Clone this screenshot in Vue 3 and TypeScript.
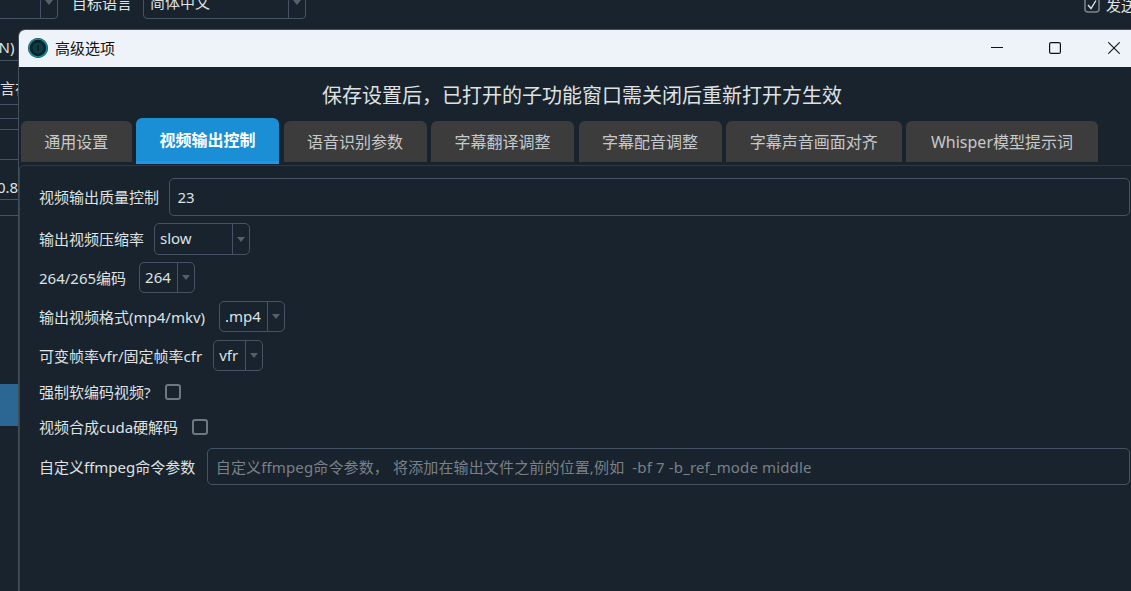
<script setup lang="ts">
const tabs = [
  { label: '通用设置', width: 110.5 },
  { label: '视频输出控制', width: 143, active: true },
  { label: '语音识别参数', width: 143 },
  { label: '字幕翻译调整', width: 143 },
  { label: '字幕配音调整', width: 143 },
  { label: '字幕声音画面对齐', width: 175.5 },
  { label: 'Whisper模型提示词', width: 192 },
]
const selects = [
  { label: '输出视频压缩率', value: 'slow', width: 96, cls: 'r2' },
  { label: '264/265编码', value: '264', width: 56, cls: 'r3' },
  { label: '输出视频格式(mp4/mkv)', value: '.mp4', width: 66, cls: 'r4' },
  { label: '可变帧率vfr/固定帧率cfr', value: 'vfr', width: 50, cls: 'r5' },
]
</script>

<template>
  <div class="desk">
    <div class="back-top">
      <div class="bsel bsel-a"><span class="bval"></span><span class="arrow-cell"><i class="tri"></i></span></div>
      <span class="blabel">目标语言</span>
      <div class="bsel bsel-b"><span class="bval">简体中文</span><span class="arrow-cell"><i class="tri"></i></span></div>
      <span class="bcheck"><svg width="16" height="16" viewBox="0 0 16 16"><rect x="1" y="1" width="14" height="14" rx="3" fill="none" stroke="#7d858d" stroke-width="1.5"/><path d="M4 8l3 3.5L12 3.5" fill="none" stroke="#dfe1e2" stroke-width="1.4"/></svg><span>发送</span></span>
    </div>
    <div class="back-left">
      <div class="bl a"><span>(N)</span></div>
      <div class="bl b"><span>言在</span></div>
      <div class="bl c"></div>
      <div class="bl d"></div>
      <div class="bl e"></div>
      <div class="bl f"><span>0.8</span></div>
      <div class="bl g"></div>
      <div class="blue"></div>
    </div>

    <section class="dialog">
      <header class="titlebar">
        <svg class="logo" width="20" height="20" viewBox="0 0 20 20">
          <circle cx="10" cy="10" r="10" fill="#06222a"/>
          <circle cx="10" cy="10" r="9" fill="none" stroke="#1c8795" stroke-width="1.6"/>
          <circle cx="10" cy="10" r="5.5" fill="#103a44"/>
          <rect x="9.2" y="7" width="1.6" height="6" fill="#072229"/>
        </svg>
        <span class="wintitle">高级选项</span>
        <div class="winbtns">
          <svg width="12" height="12" viewBox="0 0 12 12"><path d="M0 5.5h12" stroke="#111" stroke-width="1.2"/></svg>
          <svg width="12" height="12" viewBox="0 0 12 12"><rect x="0.6" y="0.6" width="10.8" height="10.8" rx="1.5" fill="none" stroke="#111" stroke-width="1.2"/></svg>
          <svg class="close" width="12" height="12" viewBox="0 0 12 12"><path d="M0.3 0.3l11.4 11.4M11.7 0.3L0.3 11.7" stroke="#111" stroke-width="1.1"/></svg>
        </div>
      </header>
      <div class="body">
        <h1 class="notice">保存设置后，已打开的子功能窗口需关闭后重新打开方生效</h1>
        <nav class="tabs">
          <button v-for="t in tabs" :key="t.label" class="tab" :class="{ active: t.active }" :style="{ width: t.width + 'px' }">{{ t.label }}</button>
        </nav>
        <div class="form">
          <div class="row r1">
            <label>视频输出质量控制</label>
            <input class="field" value="23" />
          </div>
          <div v-for="s in selects" :key="s.label" class="row" :class="s.cls">
            <label>{{ s.label }}</label>
            <div class="select" :style="{ width: s.width + 'px' }">
              <span class="val">{{ s.value }}</span>
              <span class="arrow-cell"><i class="tri"></i></span>
            </div>
          </div>
          <div class="row r6"><label>强制软编码视频?</label><span class="check"></span></div>
          <div class="row r7"><label>视频合成cuda硬解码</label><span class="check"></span></div>
          <div class="row r8">
            <label>自定义ffmpeg命令参数</label>
            <input class="field ph" placeholder="自定义ffmpeg命令参数， 将添加在输出文件之前的位置,例如  -bf 7 -b_ref_mode middle" />
          </div>
        </div>
      </div>
    </section>
  </div>
</template>

<style>
html, body { margin: 0; background: #19232d; overflow: hidden; }
</style>

<style scoped>
.desk {
  position: relative;
  width: 1131px;
  height: 591px;
  overflow: hidden;
  background: #19232d;
  color: #dfe1e2;
  font-family: "Noto Sans", "Noto Sans CJK SC", sans-serif;
  font-size: 15px;
}
.back-top { position: absolute; left: 0; top: -14px; width: 1131px; height: 33px; }
.bsel {
  position: absolute; top: 0; height: 33px; box-sizing: border-box;
  border: 1.5px solid #455364; border-radius: 4px; display: flex;
}
.bsel-a { left: -80px; width: 138px; }
.bsel-b { left: 143px; width: 163px; }
.bval { flex: 1; padding-left: 6px; line-height: 30px; }
.blabel { position: absolute; left: 72px; top: 7px; line-height: 20px; }
.bcheck { position: absolute; left: 1084px; top: 9px; display: flex; align-items: center; gap: 6px; line-height: 20px; white-space: nowrap; }
.back-left { position: absolute; left: 0; top: 0; width: 19px; height: 591px; }
.bl { position: absolute; left: 0; width: 19px; border-bottom: 1px solid #455364; overflow: hidden; white-space: nowrap; }
.bl span { display: block; }
.bl.a { top: 36px; height: 24px; line-height: 22px; }
.bl.a span { margin-left: -6px; }
.bl.b { top: 60px; height: 44px; line-height: 56px; }
.bl.c { top: 104px; height: 14px; }
.bl.d { top: 118px; height: 11px; }
.bl.e { top: 130px; height: 29px; }
.bl.f { top: 160px; height: 39px; line-height: 54px; }
.bl.f span { margin-left: -3px; }
.bl.g { top: 200px; height: 15px; }
.blue { position: absolute; left: 0; top: 384px; width: 19px; height: 42px; background: #2c6692; }

.dialog {
  position: absolute; left: 18px; top: 29px; width: 1120px; height: 570px;
  box-sizing: border-box; border-left: 1px solid #43505c; border-top: 1px solid #43505c;
  border-top-left-radius: 7px; overflow: hidden; background: #19232d;
}
.titlebar {
  height: 37px; background: #eef3f9; display: flex; align-items: center; color: #111;
  padding-left: 9px; padding-bottom: 1px; box-sizing: border-box;
}
.logo { flex: none; }
.wintitle { margin-left: 7px; font-size: 15px; line-height: 20px; margin-bottom: 1px; }
.winbtns { position: absolute; left: 972px; top: 12px; display: flex; gap: 46px; }
.close { margin-left: 1px; }
.notice {
  margin: 0; height: 53px; box-sizing: border-box; padding-top: 14px; padding-left: 7px;
  font-size: 20px; font-weight: 400; line-height: 29px; text-align: center; color: #dfe1e2;
}
.tabs {
  display: flex; align-items: flex-end; gap: 4.5px; height: 45px; box-sizing: border-box;
  padding-left: 2px;
}
.tab {
  height: 41px; margin-bottom: 3px; padding: 0 0 2px; border: 0; border-radius: 6px 6px 0 0;
  background: #3c3c3c; color: #c6c9cb; font: inherit; font-size: 16px; box-sizing: border-box;
}
.tab.active {
  height: 46px; margin-bottom: 1px; background: #1a8fd5; color: #fff; font-weight: 700;
  border-bottom: 3px solid #2196e8; padding-bottom: 2px;
}
.form {
  padding: 0 8px 0 19px; height: 440px; box-sizing: border-box;
  border-left: 1px solid #3a4148; border-top: 1px solid #2f3a45; border-top-left-radius: 5px;
}
.row { display: flex; align-items: center; white-space: nowrap; }
.row label { line-height: 20px; }
.r1 { margin-top: 12px; height: 38px; gap: 10px; }
.r2 { margin-top: 7px; height: 32px; gap: 10px; }
.r3 { margin-top: 7px; height: 31px; gap: 13px; }
.r4 { margin-top: 8px; height: 31px; gap: 14px; }
.r5 { margin-top: 8px; height: 31px; gap: 11px; }
.r6 { margin-top: 13px; height: 16px; gap: 14px; }
.r7 { margin-top: 19px; height: 16px; gap: 14px; }
.r8 { margin-top: 13px; height: 37px; gap: 12px; }
.field {
  flex: 1; min-width: 0; height: 100%; box-sizing: border-box; padding: 0 7.5px;
  background: #19232d; border: 1.5px solid #455364; border-radius: 5px;
  color: #dfe1e2; font: inherit; outline: none;
}
.field::placeholder { color: #7a8087; opacity: 1; letter-spacing: 0.14px; }
.select {
  height: 100%; box-sizing: border-box; display: flex; border: 1.5px solid #455364; border-radius: 5px;
}
.val { flex: 1; padding-left: 5px; line-height: 29px; }
.arrow-cell {
  flex: none; width: 16px; border-left: 1.5px solid #455364; display: flex; align-items: center; justify-content: center;
}
.tri { width: 0; height: 0; border: 4px solid transparent; border-top: 5px solid #55606c; border-bottom: 0; }
.check {
  width: 16px; height: 16px; box-sizing: border-box; border: 2px solid #6f7780; border-radius: 3px; flex: none;
}
</style>
